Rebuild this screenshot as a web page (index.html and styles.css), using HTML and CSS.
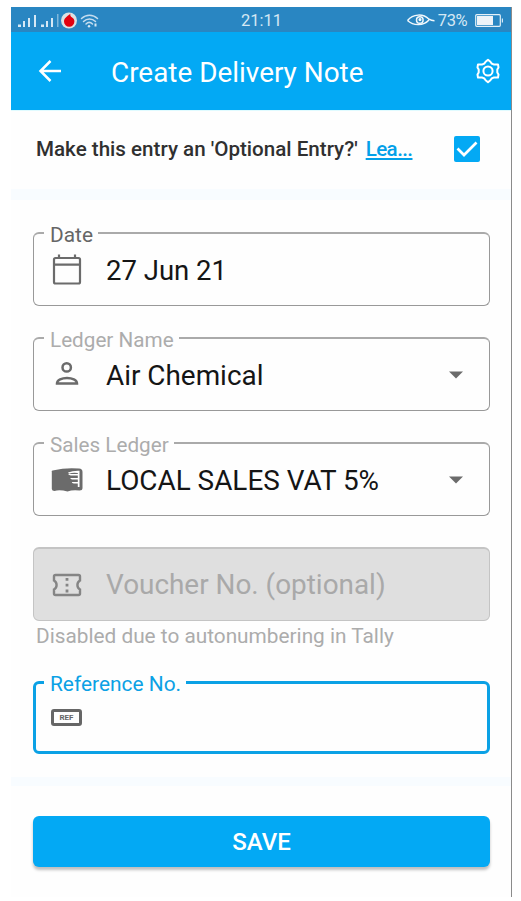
FILE: index.html
```html
<!DOCTYPE html>
<html lang="en">
<head>
<meta charset="utf-8">
<title>Create Delivery Note</title>
<link rel="stylesheet" href="styles.css">
</head>
<body>
<div class="phone">
  <div class="status">
    <div class="status-left">
      <svg width="82" height="25" viewBox="0 0 82 25">
        <g fill="#d6e8f5">
          <rect x="0" y="16.500" width="3" height="2.500"/><rect x="5" y="13" width="2" height="6"/><rect x="10" y="10" width="2" height="9"/><rect x="16" y="7" width="2" height="12"/>
          <rect x="23" y="16.500" width="3" height="2.500"/><rect x="28" y="13" width="2" height="6"/><rect x="33" y="10" width="2" height="9"/><rect x="39" y="6" width="1.500" height="13" opacity=".5"/>
        </g>
        <circle cx="51" cy="12.500" r="8" fill="#dde0e2"/>
        <path d="M52.500 5.500c-1.500 1.800-6.500 4-6.500 8a5.200 5.200 0 0 0 10.400 0c0-3-2.500-4-3.500-5-.7-.8-.8-2-.4-3z" fill="#e2000f"/>
        <g fill="none" stroke="#c5ddef" stroke-width="1.500" stroke-linecap="round">
          <path d="M63.500 10.500c4.500-4.500 11.500-4.500 16 0M65.500 13.500c3.500-3.500 8.500-3.500 12 0M68 16c2-2 4.500-2 6.500 0"/>
        </g>
        <circle cx="71" cy="18.300" r="1.200" fill="#d6e8f5"/><path d="M76.500 15.500h2v3h-2z" fill="#d6e8f5"/>
      </svg>
    </div>
    <span class="time">21:11</span>
    <div class="status-right">
      <svg width="28" height="14" viewBox="0 0 28 14" fill="none" stroke="#f2f8fc" stroke-width="1.500">
        <path d="M.5 7.500C6 .8 16 .3 22 6.200c2 1.300 3.500 1.500 5.500 1.500M.5 7.500c6 5.500 16 5.500 21.500-.5"/><circle cx="12.800" cy="7" r="3.300"/><circle cx="13" cy="6.600" r=".8" fill="#f2f8fc"/>
      </svg>
      <span class="percent">73%</span>
      <svg width="29" height="13" viewBox="0 0 29 13"><rect x=".7" y=".7" width="24.600" height="11.600" rx="1" fill="none" stroke="#e3f0f8" stroke-width="1.200"/><path d="M2 2h16v9H2z" fill="#edf3f8"/><path d="M26.800 4.500h1.200v4h-1.200z" fill="#d6e8f5"/></svg>
    </div>
  </div>

  <header class="appbar">
    <svg class="back" width="24" height="24" viewBox="0 0 24 24" fill="none" stroke="#fff" stroke-width="2.500"><path d="M23 12H2.500M12.500 2 2.500 12l10 10"/></svg>
    <h1 class="title">Create Delivery Note</h1>
    <svg class="gear" width="26" height="26" viewBox="0 0 26 26" fill="none" stroke="#fff" stroke-width="2" stroke-linejoin="round"><circle cx="13" cy="13" r="4.600"/><path d="M10.600 3.700 13 1.700l2.400 2 1.200 1.800 2 .9h4.400l.5 3-1.200 2.200v2.800l1.200 2.200-.5 3h-4.400l-2 .9-1.200 1.800-2.400 2-2.400-2-1.200-1.800-2-.9H3l-.5-3 1.200-2.200v-2.800L2.500 9.400l.5-3h4.400l2-.9z"/></svg>
  </header>

  <div class="optional">
    <span class="question">Make this entry an 'Optional Entry?'</span>
    <a class="learn">Lea...</a>
    <svg class="check" width="26" height="26" viewBox="0 0 26 26"><rect width="26" height="26" rx="2" fill="#03a9f4"/><path d="m3.500 12.500 6.500 6.500L22.500 6.500" fill="none" stroke="#fff" stroke-width="2.700"/></svg>
  </div>
  <div class="divider"></div>

  <main class="form">
    <fieldset class="field">
      <legend class="label dark">Date</legend>
      <div class="row">
        <svg class="icon" width="32" height="32" viewBox="0 0 32 32" fill="none" stroke="#6b6b6b" stroke-width="2.200"><rect x="3" y="4" width="26" height="25.500" rx="1.500"/><path d="M3 10.700h26M8 .5V4M24 .5V4"/></svg>
        <span class="value v-date">27 Jun 21</span>
      </div>
    </fieldset>
    <fieldset class="field">
      <legend class="label l-ledger">Ledger Name</legend>
      <div class="row">
        <svg class="icon" width="32" height="32" viewBox="0 0 32 32" fill="none" stroke="#6b6b6b" stroke-width="2.500"><circle cx="15.700" cy="8.400" r="4.200"/><path d="M6 24.500c0-7.400 20-7.400 20 0z"/></svg>
        <span class="value">Air Chemical</span>
        <svg class="arrow" width="14" height="8" viewBox="0 0 14 8"><path d="M0 .5h14L7 7.500z" fill="#6b6b6b"/></svg>
      </div>
    </fieldset>
    <fieldset class="field">
      <legend class="label l-sales">Sales Ledger</legend>
      <div class="row">
        <svg class="icon" width="32" height="32" viewBox="0 0 32 32"><path d="M.8 8Q0 6.500 3 6.200 14 3.500 28 4.500q3.500.2 3.500 3.500v16q0 2.500-3 2.500-7-1-12 1-8-2-13-.5-2.500 0-2.700-2z" fill="#6b6b6b"/><path d="M17 8.500q5-2 11.500-1.700V23h-1.700v-3.500h-4q-2-.3-2-1.600h6v-2.400h-5.500q-2-.2-2-1.500h7.500v-2.600h-7q-1.500 0-2.800-1.300h9.800V9q-5-.8-8.800.7z" fill="#fff"/></svg>
        <span class="value">LOCAL SALES VAT 5%</span>
        <svg class="arrow" width="14" height="8" viewBox="0 0 14 8"><path d="M0 .5h14L7 7.500z" fill="#6b6b6b"/></svg>
      </div>
    </fieldset>
    <div class="disabled">
      <svg class="icon" width="32" height="32" viewBox="0 0 32 32" fill="none" stroke="#858585" stroke-width="2.400"><path d="M4.500 6h23q1.500 0 1.500 1.500v4a5.200 5.200 0 0 0 0 9v4q0 1.500-1.500 1.500h-23Q3 26 3 24.500v-4a5.200 5.200 0 0 0 0-9v-4Q3 6 4.500 6z"/><path d="M16 9v14.500" stroke-width="2.800" stroke-dasharray="2.800 3"/></svg>
      <span class="value">Voucher No. (optional)</span>
    </div>
    <div class="helper">Disabled due to autonumbering in Tally</div>
    <fieldset class="field active">
      <legend class="label">Reference No.</legend>
      <div class="row">
        <span class="ref">REF</span>
      </div>
    </fieldset>
  </main>
  <div class="divider thin"></div>
  <footer class="footer"><button class="save">SAVE</button></footer>
</div>
</body>
</html>
```
FILE: styles.css
```css
* { box-sizing: border-box; }
body { margin: 0; background: #fff; font-family: Roboto, "Liberation Sans", sans-serif; }
.phone { width: 501px; height: 890px; margin: 7px 0 0 11px; border-right: 1px solid #8b8b8b; background: #fefefe; overflow: hidden; }
.status { height: 25px; background: #2986c2; display: grid; grid-template-columns: 223px 1fr auto; align-items: center; padding: 0 7px; color: #d5e8f4; }
.status-left { height: 25px; display: flex; }
.time { font-size: 16.500px; line-height: 25px; padding-top: 1px; }
.status-right { display: flex; align-items: center; gap: 3px; }
.percent { font-size: 16.500px; line-height: 25px; letter-spacing: -.5px; margin-right: 5px; }
.appbar { height: 78px; background: #03a9f4; color: #fff; display: flex; align-items: center; padding: 0 10px 0 27px; }
.title { margin: 3px 0 0 49px; font-size: 27.900px; font-weight: 400; line-height: 34px; white-space: nowrap; }
.gear { margin-left: auto; }
.optional { height: 79px; display: flex; align-items: center; padding: 0 31px 2px 25px; border-top: 1px solid #e0fbff; font-size: 20.600px; font-weight: 500; white-space: nowrap; }
.question { color: #303030; }
.learn { color: #03a0e8; text-decoration: underline; margin-left: 8px; letter-spacing: -.6px; text-decoration-thickness: 2px; text-underline-offset: 2px; }
.check { margin-left: auto; }
.divider { height: 11px; background: #f8fcff; }
.thin { height: 9px; }
.form { height: 577px; padding: 19px 22px 0; }
.field { width: 457px; height: 87px; margin: 0 0 18px; padding: 0 10px; border: 1px solid #999; border-top: 2px solid #aaa; border-radius: 6px; min-width: 0; }
.label { padding: 5px 5px 0 6px; height: 28px; font-size: 20.900px; line-height: 23px; color: #acacac; white-space: nowrap; }
.l-ledger, .l-sales { font-size: 20.700px; }
.dark { color: #666; }
.row { height: 46px; display: flex; align-items: center; padding: 0 16px 0 7px; }
.icon { flex: none; }
.value { font-size: 27.900px; line-height: 34px; margin-left: 23px; padding-top: 2px; color: #151515; white-space: nowrap; }
.v-date { font-size: 27.500px; }
.arrow { margin-left: auto; }
.disabled { width: 457px; height: 74px; margin-top: 31px; padding: 0 18px 0 17px; display: flex; align-items: center; background: #dfdfdf; border: 1px solid #c4c4c4; border-top-width: 2px; border-radius: 6px; }
.disabled .value { color: #a9a9a9; padding-top: 0; }
.helper { height: 30px; padding-left: 3px; font-size: 20.800px; line-height: 30px; color: #acacac; white-space: nowrap; }
.active { height: 86px; margin: 17px 0 0; padding: 0 8px; border: 3px solid #0ba1e5; }
.active .label { color: #0ba1e5; }
.active .row { height: 42px; }
.ref { width: 31px; height: 17px; border: 3px solid #666; border-radius: 3px; color: #666; font-size: 8px; line-height: 11px; font-weight: 700; text-align: center; }
.footer { padding: 30px 22px 0; }
.save { display: block; width: 457px; height: 51px; border: 0; border-radius: 6px; background: #03a9f4; color: #fff; font: 500 24px/52px Roboto, sans-serif; padding: 0; box-shadow: 0 3px 3px rgba(0,0,0,.25); }
```
